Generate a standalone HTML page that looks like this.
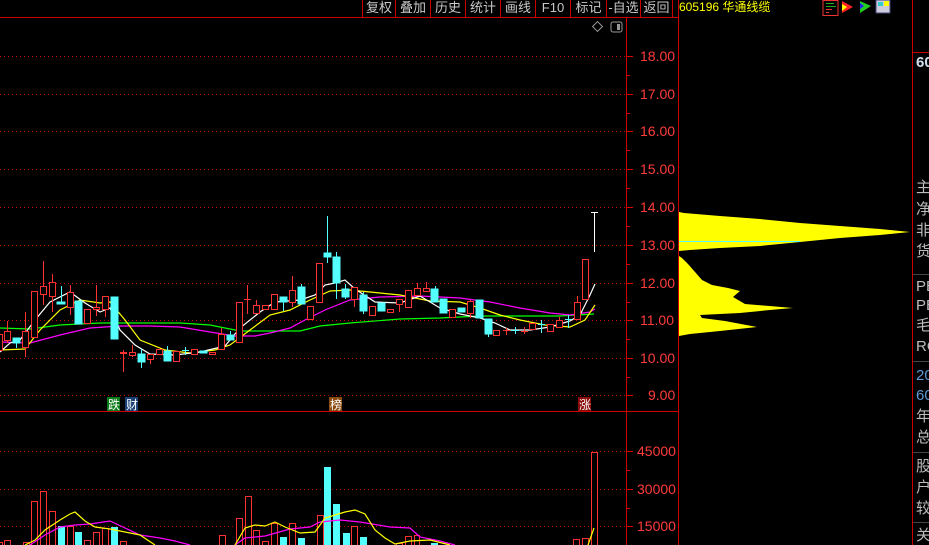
<!DOCTYPE html>
<html><head><meta charset="utf-8"><style>
body{margin:0;background:#000;width:929px;height:545px;overflow:hidden;position:relative;font-family:"Liberation Sans","Noto Sans CJK SC",sans-serif}
.tb{position:absolute;top:0;height:17px;color:#c8c8c8;font-size:13px;line-height:15px;text-align:center}
.rt{position:absolute;left:916px;color:#bcbcbc;font-size:15px;line-height:16px;white-space:nowrap}
</style></head><body>
<svg width="929" height="545" style="position:absolute;left:0;top:0" xmlns="http://www.w3.org/2000/svg">
<g stroke="#c00" stroke-width="1" fill="none">
<line x1="0" y1="17.5" x2="678" y2="17.5"/>
<line x1="626.5" y1="17" x2="626.5" y2="545"/>
<line x1="678.5" y1="0" x2="678.5" y2="545"/>
<line x1="912.5" y1="0" x2="912.5" y2="545"/>
<line x1="913" y1="52.5" x2="929" y2="52.5"/>
<line x1="0" y1="411.5" x2="678" y2="411.5"/>
</g>
<g stroke="#c00" stroke-width="1">
<line x1="362.5" y1="0" x2="362.5" y2="17"/><line x1="395.5" y1="0" x2="395.5" y2="17"/><line x1="430.5" y1="0" x2="430.5" y2="17"/><line x1="465.5" y1="0" x2="465.5" y2="17"/><line x1="500.5" y1="0" x2="500.5" y2="17"/><line x1="535.5" y1="0" x2="535.5" y2="17"/><line x1="570.5" y1="0" x2="570.5" y2="17"/><line x1="606.5" y1="0" x2="606.5" y2="17"/><line x1="640.5" y1="0" x2="640.5" y2="17"/><line x1="672.5" y1="0" x2="672.5" y2="17"/>
</g>
<g stroke="#b00" stroke-width="1" stroke-dasharray="1,3">
<line x1="0" y1="56.5" x2="626" y2="56.5"/><line x1="0" y1="94.5" x2="626" y2="94.5"/><line x1="0" y1="131.5" x2="626" y2="131.5"/><line x1="0" y1="169.5" x2="626" y2="169.5"/><line x1="0" y1="207.5" x2="626" y2="207.5"/><line x1="0" y1="245.5" x2="626" y2="245.5"/><line x1="0" y1="283.5" x2="626" y2="283.5"/><line x1="0" y1="320.5" x2="626" y2="320.5"/><line x1="0" y1="358.5" x2="626" y2="358.5"/><line x1="0" y1="395.5" x2="626" y2="395.5"/>
<line x1="0" y1="451.5" x2="626" y2="451.5"/><line x1="0" y1="489.5" x2="626" y2="489.5"/><line x1="0" y1="526.5" x2="626" y2="526.5"/>
</g>
<g stroke="#d00" stroke-width="1">
<line x1="626" y1="56.5" x2="633" y2="56.5"/><line x1="626" y1="94.5" x2="633" y2="94.5"/><line x1="626" y1="131.5" x2="633" y2="131.5"/><line x1="626" y1="169.5" x2="633" y2="169.5"/><line x1="626" y1="207.5" x2="633" y2="207.5"/><line x1="626" y1="245.5" x2="633" y2="245.5"/><line x1="626" y1="283.5" x2="633" y2="283.5"/><line x1="626" y1="320.5" x2="633" y2="320.5"/><line x1="626" y1="358.5" x2="633" y2="358.5"/><line x1="626" y1="395.5" x2="633" y2="395.5"/>
<line x1="626" y1="75.5" x2="630" y2="75.5"/><line x1="626" y1="113.5" x2="630" y2="113.5"/><line x1="626" y1="150.5" x2="630" y2="150.5"/><line x1="626" y1="188.5" x2="630" y2="188.5"/><line x1="626" y1="226.5" x2="630" y2="226.5"/><line x1="626" y1="264.5" x2="630" y2="264.5"/><line x1="626" y1="302.5" x2="630" y2="302.5"/><line x1="626" y1="339.5" x2="630" y2="339.5"/><line x1="626" y1="377.5" x2="630" y2="377.5"/>
<line x1="626" y1="451.5" x2="633" y2="451.5"/><line x1="626" y1="489.5" x2="633" y2="489.5"/><line x1="626" y1="526.5" x2="633" y2="526.5"/><line x1="626" y1="470.5" x2="630" y2="470.5"/><line x1="626" y1="508.5" x2="630" y2="508.5"/>
</g>
<g fill="#ff3c3c" font-size="14" font-family="Liberation Sans,sans-serif">
<text x="640" y="61">18.00</text><text x="640" y="99">17.00</text><text x="640" y="136">16.00</text><text x="640" y="174">15.00</text><text x="640" y="212">14.00</text><text x="640" y="250">13.00</text><text x="640" y="288">12.00</text><text x="640" y="325">11.00</text><text x="640" y="363">10.00</text><text x="648" y="400">9.00</text>
<text x="637" y="456">45000</text><text x="637" y="494">30000</text><text x="637" y="531">15000</text>
</g>
<!-- header icons -->
<rect x="594" y="23" width="7" height="7" transform="rotate(45 597.5 26.5)" fill="none" stroke="#999"/>
<rect x="611" y="22" width="11" height="10" rx="2" fill="none" stroke="#999"/>
<rect x="617" y="24" width="3" height="6" fill="#999"/>
<!-- MA lines -->
<g fill="none" stroke-width="1.2">
<polyline stroke="#00ff00" points="0,328 30,329 60,325 100,323 140,323 180,323 210,325 240,331 270,331 300,331 320,326 350,323 400,319 440,318 480,316 520,316 560,316 594,314"/>
<polyline stroke="#ff00ff" points="0,342 30,343 60,335 90,328 120,326 150,326 180,327 210,332 235,336 255,336 270,333 290,328 305,320 325,310 350,300 380,297 420,296 460,298 490,302 520,308 550,313 570,315 590,312 595,309"/>
<polyline stroke="#ffff00" points="0,350 25,349 40,330 60,310 80,300 100,303 110,302 125,320 140,340 165,350 190,353 215,350 230,345 250,330 270,315 290,310 310,300 330,291 350,290 380,293 400,295 430,301 460,302 480,308 500,315 520,320 545,325 570,327 585,320 595,305"/>
<polyline stroke="#ffffff" points="0,352 10,343 20,340 35,320 50,302 70,292 85,303 100,312 110,308 120,330 135,345 150,354 175,355 200,352 225,346 240,328 260,312 275,302 300,300 315,295 325,285 335,283 345,280 355,289 375,302 400,303 420,296 440,308 460,314 480,318 495,323 510,330 530,330 550,327 570,321 580,315 590,295 595,284"/>
</g>
<!-- candles: red hollow -->
<g stroke="#ff3232" stroke-width="1" fill="#000">
<rect x="-2.5" y="334.5" width="5" height="16"/>
<line x1="7.5" y1="321" x2="7.5" y2="343"/><rect x="4.5" y="331.5" width="6" height="9"/>
<line x1="25.5" y1="312" x2="25.5" y2="357"/><rect x="22.5" y="331.5" width="6" height="16"/>
<rect x="31.5" y="291.5" width="6" height="46"/>
<line x1="43.5" y1="261" x2="43.5" y2="305"/><rect x="40.5" y="286.5" width="6" height="8"/>
<line x1="52.5" y1="274" x2="52.5" y2="312"/><rect x="49.5" y="282.5" width="6" height="14"/>
<line x1="70.5" y1="285" x2="70.5" y2="315"/><rect x="67.5" y="292.5" width="6" height="15"/>
<rect x="84.5" y="309.5" width="6" height="14"/>
<line x1="96.5" y1="285" x2="96.5" y2="316"/><rect x="93.5" y="307.5" width="6" height="2"/>
<line x1="105.5" y1="296" x2="105.5" y2="317"/><rect x="102.5" y="296.5" width="6" height="13"/>
<line x1="123.5" y1="350" x2="123.5" y2="372"/><rect x="120.5" y="352.5" width="6" height="1"/>
<line x1="132.5" y1="345" x2="132.5" y2="357"/><rect x="129.5" y="352.5" width="6" height="3"/>
<line x1="150.5" y1="354" x2="150.5" y2="364"/><rect x="147.5" y="354.5" width="6" height="5"/>
<rect x="156.5" y="349.5" width="6" height="5"/>
<rect x="173.5" y="351.5" width="6" height="10"/>
<rect x="191.5" y="349.5" width="6" height="5"/>
<rect x="209.5" y="352.5" width="6" height="2"/>
<line x1="221.5" y1="328" x2="221.5" y2="349"/><rect x="218.5" y="334.5" width="6" height="15"/>
<rect x="236.5" y="302.5" width="6" height="40"/>
<line x1="247.5" y1="285" x2="247.5" y2="314"/><line x1="244" y1="299.5" x2="251" y2="299.5"/>
<line x1="256.5" y1="300" x2="256.5" y2="313"/><rect x="253.5" y="305.5" width="6" height="8"/>
<line x1="265.5" y1="305" x2="265.5" y2="310"/><rect x="262.5" y="305.5" width="6" height="4"/>
<rect x="271.5" y="294.5" width="6" height="15"/>
<line x1="292.5" y1="276" x2="292.5" y2="307"/><rect x="289.5" y="290.5" width="6" height="12"/>
<rect x="307.5" y="306.5" width="6" height="13"/>
<rect x="316.5" y="263.5" width="6" height="39"/>
<line x1="354.5" y1="287" x2="354.5" y2="307"/><rect x="351.5" y="287.5" width="6" height="12"/>
<rect x="369.5" y="306.5" width="6" height="9"/>
<rect x="387.5" y="309.5" width="6" height="3"/>
<line x1="399.5" y1="299" x2="399.5" y2="312"/><rect x="396.5" y="299.5" width="6" height="5"/>
<rect x="405.5" y="290.5" width="6" height="17"/>
<line x1="417.5" y1="283" x2="417.5" y2="295"/><rect x="414.5" y="288.5" width="6" height="7"/>
<line x1="426.5" y1="282" x2="426.5" y2="291"/><rect x="423.5" y="288.5" width="6" height="3"/>
<rect x="449.5" y="309.5" width="6" height="8"/>
<line x1="470.5" y1="300" x2="470.5" y2="318"/><rect x="467.5" y="301.5" width="6" height="12"/>
<rect x="493.5" y="330.5" width="6" height="5"/>
<line x1="506.5" y1="328" x2="506.5" y2="335"/><line x1="503" y1="330.5" x2="510" y2="330.5"/>
<line x1="524.5" y1="327" x2="524.5" y2="334"/><line x1="521" y1="331.5" x2="528" y2="331.5"/>
<rect x="529.5" y="323.5" width="6" height="6"/>
<rect x="547.5" y="324.5" width="6" height="7"/>
<line x1="559.5" y1="317" x2="559.5" y2="327"/><rect x="556.5" y="320.5" width="6" height="7"/>
<line x1="577.5" y1="296" x2="577.5" y2="319"/><rect x="574.5" y="302.5" width="6" height="17"/>
<rect x="582.5" y="259.5" width="6" height="40"/>
</g>
<!-- cyan candles -->
<g stroke="#54ffff" fill="#54ffff">
<line x1="16.5" y1="338" x2="16.5" y2="348"/><rect x="13" y="338" width="7" height="5"/>
<line x1="61.5" y1="286" x2="61.5" y2="304"/><rect x="57" y="302" width="8" height="2"/>
<rect x="75" y="301" width="7" height="23"/>
<rect x="111" y="297" width="7" height="42"/>
<line x1="141.5" y1="349" x2="141.5" y2="368"/><rect x="138" y="354" width="7" height="8"/>
<line x1="167.5" y1="346" x2="167.5" y2="361"/><rect x="164" y="351" width="7" height="10"/>
<line x1="185.5" y1="347" x2="185.5" y2="355"/><line x1="182" y1="350.5" x2="189" y2="350.5" stroke-width="1"/>
<rect x="200" y="351" width="7" height="2"/>
<line x1="230.5" y1="331" x2="230.5" y2="340"/><rect x="227" y="335" width="7" height="5"/>
<line x1="283.5" y1="297" x2="283.5" y2="311"/><rect x="280" y="297" width="7" height="5"/>
<line x1="301.5" y1="284" x2="301.5" y2="304"/><rect x="298" y="287" width="7" height="17"/>
<line x1="327.5" y1="216" x2="327.5" y2="263"/><rect x="324" y="253" width="7" height="4"/>
<line x1="336.5" y1="252" x2="336.5" y2="299"/><rect x="333" y="257" width="7" height="26"/>
<line x1="345.5" y1="284" x2="345.5" y2="299"/><rect x="342" y="289" width="7" height="8"/>
<line x1="363.5" y1="292" x2="363.5" y2="314"/><rect x="360" y="295" width="7" height="16"/>
<rect x="378" y="303" width="7" height="8"/>
<line x1="435.5" y1="286" x2="435.5" y2="302"/><rect x="431" y="289" width="7" height="13"/>
<rect x="440" y="299" width="7" height="14"/>
<rect x="458" y="308" width="7" height="4"/>
<rect x="476" y="300" width="7" height="18"/>
<line x1="488.5" y1="319" x2="488.5" y2="337"/><rect x="485" y="319" width="7" height="15"/>
<line x1="515.5" y1="327" x2="515.5" y2="334"/><line x1="511" y1="330.5" x2="519" y2="330.5" stroke-width="1"/>
<line x1="541.5" y1="320" x2="541.5" y2="333"/><line x1="538" y1="324.5" x2="545" y2="324.5" stroke-width="1"/>
<line x1="568.5" y1="315" x2="568.5" y2="328"/><line x1="565" y1="319.5" x2="572" y2="319.5" stroke-width="1"/>
</g>
<g stroke="#fff"><line x1="594.5" y1="212" x2="594.5" y2="252"/><line x1="591" y1="212.5" x2="598" y2="212.5"/></g>
<!-- markers -->
<rect x="107" y="397" width="13" height="14" fill="#0a7a1a"/><text x="108" y="409" font-size="12" fill="#fff">跌</text>
<rect x="125" y="397" width="13" height="14" fill="#1a3f75"/><text x="126" y="409" font-size="12" fill="#fff">财</text>
<rect x="329" y="397" width="13" height="14" fill="#8a4a10"/><text x="330" y="409" font-size="12" fill="#fff">榜</text>
<rect x="578" y="397" width="13" height="14" fill="#8a0a0a"/><text x="579" y="409" font-size="12" fill="#fff">涨</text>
<!-- volume -->
<g stroke="#ff3232" fill="#000">
<rect x="-2.5" y="542.5" width="5" height="5"/><rect x="4.5" y="540.5" width="6" height="8"/><rect x="23.5" y="542.5" width="6" height="5"/><rect x="31.5" y="501.5" width="6" height="46"/><rect x="40.5" y="491.5" width="6" height="56"/><rect x="49.5" y="511.5" width="6" height="36"/><rect x="67.5" y="526.5" width="6" height="20"/><rect x="84.5" y="540.5" width="6" height="8"/><rect x="93.5" y="532.5" width="6" height="15"/><rect x="102.5" y="528.5" width="6" height="19"/><rect x="120.5" y="541.5" width="6" height="6"/><rect x="219.5" y="535.5" width="6" height="12"/><rect x="236.5" y="518.5" width="6" height="29"/><rect x="245.5" y="496.5" width="6" height="51"/><rect x="253.5" y="530.5" width="6" height="17"/><rect x="262.5" y="541.5" width="6" height="6"/><rect x="271.5" y="523.5" width="6" height="24"/><rect x="289.5" y="523.5" width="6" height="24"/><rect x="317.5" y="515.5" width="6" height="32"/><rect x="351.5" y="526.5" width="6" height="21"/><rect x="396.5" y="543.5" width="6" height="5"/><rect x="405.5" y="536.5" width="6" height="11"/><rect x="414.5" y="535.5" width="5" height="12"/><rect x="573.5" y="539.5" width="6" height="8"/><rect x="582.5" y="538.5" width="6" height="9"/><rect x="591.5" y="452.5" width="6" height="95"/>
</g>
<g fill="#54ffff">
<rect x="58" y="526" width="7" height="19"/><rect x="75" y="532" width="7" height="13"/><rect x="111" y="527" width="7" height="18"/><rect x="280" y="537" width="7" height="8"/><rect x="298" y="538" width="7" height="7"/><rect x="324" y="467" width="7" height="78"/><rect x="333" y="504" width="7" height="41"/><rect x="343" y="533" width="7" height="12"/><rect x="360" y="537" width="7" height="8"/><rect x="431" y="543" width="7" height="2"/>
</g>
<g fill="none" stroke-width="1.2">
<polyline stroke="#ff00ff" points="30,545 45,535 60,527 75,525 90,524 110,521 125,528 140,535 160,538 175,541 190,545"/>
<polyline stroke="#ff00ff" points="235,545 245,538 265,536 290,529 310,527 320,522 340,520 360,522 390,527 410,528 420,537 440,541 455,545"/>
<polyline stroke="#ffff00" points="25,545 35,540 45,530 60,520 70,514 75,512 85,521 95,527 110,529 125,532 140,535 155,545"/>
<polyline stroke="#ffff00" points="235,545 245,528 255,525 265,526 275,522 285,527 300,533 315,532 325,518 345,512 355,510 365,514 375,530 385,538 395,544 410,541 430,540 450,545"/>
<polyline stroke="#ffff00" points="588,545 594,528"/>
</g>
<!-- chip distribution -->
<polygon fill="#ffff00" points="679,212 684,213 720,216 760,219 800,223 840,226 880,229 910,232 880,235 840,238 800,242 760,246 720,248 690,250 679,251"/>
<line x1="679" y1="241.5" x2="800" y2="241.5" stroke="#5ff" stroke-width="1"/>
<polygon fill="#ffff00" points="679,256 682,258 688,264 695,272 702,280 712,285 728,288 740,291 733,297 745,304 793,308 770,310 740,313 700,315 702,318 725,321 757,327 720,331 690,334 679,336"/>
<!-- top-right icons -->
<rect x="823" y="0.5" width="15" height="15" fill="none" stroke="#e33"/>
<g stroke-width="1"><line x1="826" y1="3.5" x2="834" y2="3.5" stroke="#2a2"/><line x1="826" y1="6.5" x2="836" y2="6.5" stroke="#2a2"/><line x1="826" y1="9.5" x2="832" y2="9.5" stroke="#e33"/><line x1="826" y1="12.5" x2="829" y2="12.5" stroke="#e33"/></g>
<polygon points="842,1 853,7 842,13" fill="#f22"/><polygon points="842,4 847,7 842,11" fill="#ff0"/>
<polygon points="860,1 871,6 860,13" fill="#2c2"/><polygon points="860,3 864,6 860,9" fill="#22f"/>
<rect x="876" y="0" width="14" height="13" fill="#ccd" stroke="#447"/><rect x="878" y="2" width="5" height="4" fill="#3cc"/><rect x="884" y="1" width="5" height="5" fill="#ff0"/>
</svg>
<div class="tb" style="left:363px;width:32px">复权</div>
<div class="tb" style="left:396px;width:34px">叠加</div>
<div class="tb" style="left:431px;width:34px">历史</div>
<div class="tb" style="left:466px;width:34px">统计</div>
<div class="tb" style="left:501px;width:34px">画线</div>
<div class="tb" style="left:536px;width:34px">F10</div>
<div class="tb" style="left:571px;width:35px">标记</div>
<div class="tb" style="left:607px;width:33px">-自选</div>
<div class="tb" style="left:641px;width:31px">返回</div>
<div style="position:absolute;left:679px;top:0;color:#ffff00;font-size:12px;line-height:14px">605196 华通线缆</div>
<div class="rt" style="top:55px;color:#cfe0ee;font-weight:bold">60</div>
<div class="rt" style="top:180px">主</div><div class="rt" style="top:202px">净</div><div class="rt" style="top:223px">非</div><div class="rt" style="top:244px">货</div>
<div style="position:absolute;left:913px;top:274px;width:16px;height:1px;background:#444"></div>
<div class="rt" style="top:279px">PE</div><div class="rt" style="top:298px">PE</div><div class="rt" style="top:318px">毛</div><div class="rt" style="top:339px">RO</div>
<div style="position:absolute;left:913px;top:361px;width:16px;height:1px;background:#444"></div>
<div class="rt" style="top:368px;color:#5b9bd5">20</div><div class="rt" style="top:388px;color:#5b9bd5">60</div><div class="rt" style="top:409px">年</div><div class="rt" style="top:430px">总</div>
<div style="position:absolute;left:913px;top:452px;width:16px;height:1px;background:#444"></div>
<div class="rt" style="top:459px">股</div><div class="rt" style="top:480px">户</div><div class="rt" style="top:501px">较</div>
<div style="position:absolute;left:913px;top:522px;width:16px;height:1px;background:#444"></div>
<div class="rt" style="top:528px">关</div>
</body></html>
